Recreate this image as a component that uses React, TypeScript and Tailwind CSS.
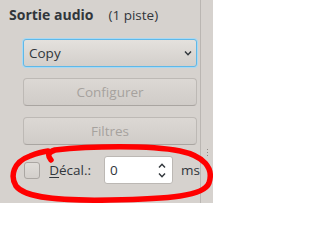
import { useState } from "react";

const Chevron = ({ up = false }: { up?: boolean }) => (
  <svg width="8" height="5" viewBox="0 0 8 5" className="block">
    <path
      d={up ? "M1 4.5 L4 1.2 L7 4.5" : "M1 0.5 L4 3.8 L7 0.5"}
      fill="none"
      stroke="#31363b"
      strokeWidth="1.4"
    />
  </svg>
);

export default function App() {
  const [offset, setOffset] = useState("0");

  return (
    <div
      className="relative flex w-[213px] h-[203px] overflow-hidden bg-[#d6d2ce] text-[#31363b] text-[13.5px]"
      style={{ fontFamily: '"Open Sans", "Noto Sans", sans-serif' }}
    >
      <div className="w-[200px] flex flex-col pt-[6px]">
        <div className="flex items-baseline pl-[9px] h-[17px] leading-[17px]">
          <span className="font-bold text-[14px]">Sortie audio</span>
          <span className="ml-[15px]">(1 piste)</span>
        </div>

        <div className="ml-[23px] mt-[16px] w-[174px] flex flex-col gap-[11px]">
          <div className="h-[28px] flex items-center justify-between pl-[5px] pr-[4px] rounded-[3px] border border-[#5fb8e8] shadow-[0_0_0_1px_#a9d9f3] bg-gradient-to-b from-[#e4e1dd] to-[#d3cfcb]">
            <span>Copy</span>
            <Chevron />
          </div>
          <button
            disabled
            className="h-[28px] rounded-[4px] border border-[#bdb9b5] border-b-[#a9a5a1] bg-gradient-to-b from-[#dcd8d4] to-[#d0ccc8] text-[#a6a29e]"
          >
            Configurer
          </button>
          <button
            disabled
            className="h-[28px] rounded-[4px] border border-[#bdb9b5] border-b-[#a9a5a1] bg-gradient-to-b from-[#dcd8d4] to-[#d0ccc8] text-[#a6a29e]"
          >
            Filtres
          </button>
        </div>

        <div className="flex items-center mt-[11px] ml-[24px] h-[28px]">
          <span className="w-[17px] h-[17px] rounded-[3px] border border-[#aaa6a2] bg-gradient-to-b from-[#dfdcd8] to-[#d3cfcb]" />
          <span className="ml-[9px]">
            <span className="underline underline-offset-2">D</span>écal.:
          </span>
          <div className="ml-[13px] w-[72px] h-[28px] flex items-center justify-between bg-white border border-[#bcb8b4] rounded-[3px] pl-[5px] pr-[6px]">
            <input
              value={offset}
              onChange={(e) => setOffset(e.target.value)}
              className="w-[40px] bg-transparent outline-none"
            />
            <div className="flex flex-col gap-[5px]">
              <Chevron up />
              <Chevron />
            </div>
          </div>
          <span className="ml-[8px]">ms</span>
        </div>
      </div>

      <div className="w-px h-full bg-[#bab6b2]" />
      <div className="flex-1 flex flex-col items-center pt-[149px] gap-[2px]">
        <span className="w-px h-px bg-[#8f8b87]" />
        <span className="w-px h-px bg-[#8f8b87]" />
        <span className="w-px h-px bg-[#8f8b87]" />
      </div>

      <svg
        className="absolute inset-0 pointer-events-none"
        width="213"
        height="203"
        viewBox="0 0 213 203"
      >
        <path
          d="M51 160 Q45 153 55 150 C90 146 150 145 180 151 C204 156 214 168 209 183 C204 196 170 199 110 200 C60 201 25 198 16 186 C10 176 13 162 30 156 Q40 152 48 151"
          fill="none"
          stroke="#ff0000"
          strokeWidth="5.5"
          strokeLinecap="round"
          strokeLinejoin="round"
        />
      </svg>
    </div>
  );
}
